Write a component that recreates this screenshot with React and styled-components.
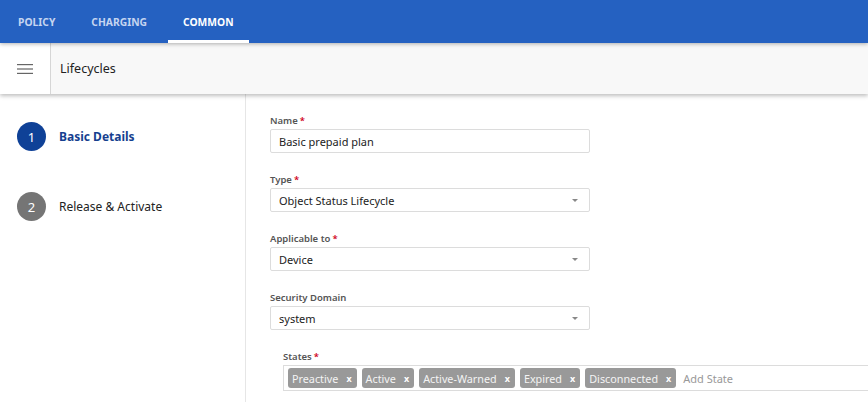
import React from "react";
import styled, { createGlobalStyle } from "styled-components";

const GlobalStyle = createGlobalStyle`
  html, body {
    margin: 0;
    padding: 0;
    background: #ffffff;
    font-family: "Noto Sans", "Open Sans", sans-serif;
    overflow: hidden;
  }
`;

const TopBar = styled.div`
  height: 43px;
  background: #2561c1;
  display: flex;
  align-items: stretch;
  padding-left: 3px;
  position: relative;
  z-index: 2;
  box-shadow: 0 1px 4px rgba(0, 0, 0, 0.3);
`;

const Tab = styled.div`
  padding: 3px 15px 0;
  display: flex;
  align-items: center;
  font-size: 10.3px;
  font-weight: 700;
  color: ${({ active }) => (active ? "#ffffff" : "#c5d5f0")};
  border-bottom: 3px solid ${({ active }) => (active ? "#ffffff" : "transparent")};
  box-sizing: border-box;
  & + & {
    margin-left: 6px;
  }
`;

const SubHeader = styled.div`
  height: 51px;
  background: #f8f8f8;
  display: flex;
  align-items: stretch;
  box-shadow: 0 2px 4px rgba(0, 0, 0, 0.25);
  position: relative;
  z-index: 1;
`;

const MenuButton = styled.div`
  width: 50px;
  display: flex;
  align-items: center;
  justify-content: center;
  background: #ffffff;
  border-right: 1px solid #d6d6d6;
`;

const PageTitle = styled.div`
  display: flex;
  align-items: center;
  padding-left: 9px;
  font-size: 12.5px;
  color: #222;
`;

const Body = styled.div`
  display: flex;
  height: 308px;
`;

const Steps = styled.div`
  width: 246px;
  border-right: 1px solid #e6e6e6;
  padding-top: 28px;
  box-sizing: border-box;
  display: flex;
  flex-direction: column;
  gap: 41px;
`;

const Step = styled.div`
  display: flex;
  align-items: center;
  padding-left: 17px;
  gap: 13px;
`;

const StepNumber = styled.div`
  width: 29px;
  height: 29px;
  border-radius: 50%;
  background: ${({ active }) => (active ? "#0f4197" : "#757575")};
  color: #fff;
  font-size: 13px;
  display: flex;
  align-items: center;
  justify-content: center;
`;

const StepLabel = styled.div`
  font-size: 12px;
  font-weight: ${({ active }) => (active ? 700 : 400)};
  color: ${({ active }) => (active ? "#163f8f" : "#222")};
`;

const Form = styled.div`
  padding: 21px 0 0 24px;
  display: flex;
  flex-direction: column;
  gap: 21px;
  flex: 1;
`;

const Field = styled.div`
  display: flex;
  flex-direction: column;
  gap: 2px;
  padding-left: ${({ indent }) => indent || 0}px;
`;

const Label = styled.div`
  font-size: 9.5px;
  font-weight: 600;
  color: #555;
  height: 12px;
  line-height: 12px;
`;

const Req = styled.span`
  color: #d0021b;
  margin-left: 2px;
`;

const Box = styled.div`
  width: 320px;
  height: 24px;
  box-sizing: border-box;
  border: 1px solid #dcdcdc;
  border-radius: 2px;
  display: flex;
  align-items: center;
  padding: 0 8px;
  font-size: 11px;
  color: #222;
  justify-content: space-between;
`;

const Caret = styled.span`
  width: 0;
  height: 0;
  border-left: 3px solid transparent;
  border-right: 3px solid transparent;
  border-top: 3px solid #888;
  margin-right: 3px;
`;

const TagBox = styled.div`
  height: 26px;
  box-sizing: border-box;
  border: 1px solid #dcdcdc;
  border-right: none;
  display: flex;
  align-items: center;
  padding-left: 4px;
  gap: 5px;
`;

const Tag = styled.div`
  background: #999999;
  color: #f4f4f4;
  font-size: 10.8px;
  border-radius: 3px;
  height: 20px;
  display: flex;
  align-items: center;
  padding: 0 5px 0 4px;
  gap: 8px;
`;

const TagX = styled.span`
  font-size: 9px;
  font-weight: 700;
  color: #fff;
`;

const Placeholder = styled.span`
  font-size: 11px;
  color: #999;
  margin-left: 2px;
`;

const Hamburger = () => (
  <svg width="16" height="12" viewBox="0 0 16 12">
    <rect x="0" y="1" width="16" height="1.2" fill="#666" />
    <rect x="0" y="5.4" width="16" height="1.2" fill="#666" />
    <rect x="0" y="9.8" width="16" height="1.2" fill="#666" />
  </svg>
);

const states = ["Preactive", "Active", "Active-Warned", "Expired", "Disconnected"];

export default function App() {
  return (
    <>
      <GlobalStyle />
      <TopBar>
        <Tab>POLICY</Tab>
        <Tab>CHARGING</Tab>
        <Tab active>COMMON</Tab>
      </TopBar>
      <SubHeader>
        <MenuButton>
          <Hamburger />
        </MenuButton>
        <PageTitle>Lifecycles</PageTitle>
      </SubHeader>
      <Body>
        <Steps>
          <Step>
            <StepNumber active>1</StepNumber>
            <StepLabel active>Basic Details</StepLabel>
          </Step>
          <Step>
            <StepNumber>2</StepNumber>
            <StepLabel>Release &amp; Activate</StepLabel>
          </Step>
        </Steps>
        <Form>
          <Field>
            <Label>
              Name<Req>*</Req>
            </Label>
            <Box>Basic prepaid plan</Box>
          </Field>
          <Field>
            <Label>
              Type<Req>*</Req>
            </Label>
            <Box>
              Object Status Lifecycle
              <Caret />
            </Box>
          </Field>
          <Field>
            <Label>
              Applicable to<Req>*</Req>
            </Label>
            <Box>
              Device
              <Caret />
            </Box>
          </Field>
          <Field>
            <Label>Security Domain</Label>
            <Box>
              system
              <Caret />
            </Box>
          </Field>
          <Field indent={13}>
            <Label>
              States<Req>*</Req>
            </Label>
            <TagBox>
              {states.map((s) => (
                <Tag key={s}>
                  {s}
                  <TagX>x</TagX>
                </Tag>
              ))}
              <Placeholder>Add State</Placeholder>
            </TagBox>
          </Field>
        </Form>
      </Body>
    </>
  );
}
